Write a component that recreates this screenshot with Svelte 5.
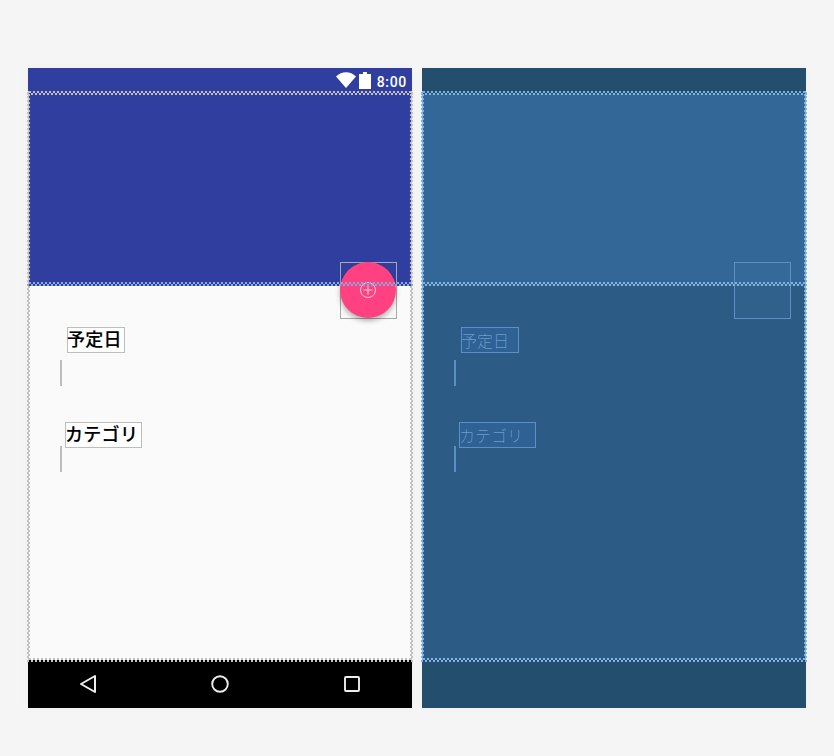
<script>
	const fields = [
		{ label: '予定日', inset: 7, width: 58 },
		{ label: 'カテゴリ', inset: 5, width: 77 }
	];
</script>

<div class="page">
	<section class="screen design">
		<div class="status">
			<svg class="wifi" viewBox="0 0 20 16" width="20" height="16"><path d="M0 4.5C5.5-1.2 14.5-1.2 20 4.5L10 16z" fill="#fff" /></svg>
			<svg class="battery" viewBox="0 0 12 17" width="12" height="17"><path d="M4 0h4v2h4v15H0V2h4z" fill="#fff" /></svg>
			<span class="time">8:00</span>
		</div>
		<div class="appbar"></div>
		<div class="content">
			{#each fields as f}
				<div class="field">
					<span class="label" style="margin-left: {f.inset}px; width: {f.width}px">{f.label}</span>
					<span class="input"></span>
				</div>
			{/each}
		</div>
		<div class="nav">
			<span class="key"><svg viewBox="0 0 18 20" width="18" height="20"><path d="M16 2v16L2 10z" fill="none" stroke="#eee" stroke-width="2" stroke-linejoin="round" /></svg></span>
			<span class="key"><svg viewBox="0 0 18 18" width="18" height="18"><circle cx="9" cy="9" r="7.8" fill="none" stroke="#eee" stroke-width="1.9" /></svg></span>
			<span class="key"><svg viewBox="0 0 16 16" width="16" height="16"><rect x="1" y="1" width="14" height="14" rx="1" fill="none" stroke="#eee" stroke-width="1.9" /></svg></span>
		</div>
		<div class="fab-box">
			<div class="fab">
				<svg viewBox="0 0 18 18" width="18" height="18"><circle cx="9" cy="9" r="7.5" fill="none" stroke="#fcd5e2" stroke-width="1" /><path d="M9 4.5v9M4.5 9h9" stroke="#fcd5e2" stroke-width="1" /></svg>
			</div>
		</div>
		<div class="frame upper"></div>
		<div class="frame lower"></div>
	</section>

	<section class="screen blueprint">
		<div class="status"></div>
		<div class="appbar"></div>
		<div class="content">
			{#each fields as f}
				<div class="field">
					<span class="label" style="margin-left: {f.inset}px; width: {f.width}px">{f.label}</span>
					<span class="input"></span>
				</div>
			{/each}
		</div>
		<div class="nav"></div>
		<div class="fab-box"></div>
		<div class="frame upper"></div>
		<div class="frame lower"></div>
	</section>
</div>

<style>
	:global(body) {
		margin: 0;
		background: #f5f5f5;
	}

	.page {
		display: flex;
		gap: 10px;
		padding: 68px 28px 48px;
		font-family: 'Noto Sans CJK JP', 'Noto Sans', sans-serif;
	}

	.screen {
		position: relative;
		display: flex;
		flex-direction: column;
		width: 384px;
		height: 640px;
		flex: none;
		box-shadow: 0 0 8px rgba(0, 0, 0, 0.03);
	}

	.status {
		display: flex;
		align-items: center;
		justify-content: flex-end;
		height: 26px;
		flex: none;
		padding: 0 5px 2px 0;
		box-sizing: border-box;
	}

	.wifi {
		margin-right: 3px;
	}

	.battery {
		margin-right: 6px;
	}

	.time {
		font-family: Roboto, sans-serif;
		font-size: 14px;
		font-weight: 500;
		color: #fff;
		letter-spacing: 0.7px;
		margin-top: 3px;
	}

	.appbar {
		height: 192px;
		flex: none;
	}

	.content {
		flex: 1;
		padding: 41px 0 0 32px;
		display: flex;
		flex-direction: column;
		gap: 36px;
	}

	.field {
		display: flex;
		flex-direction: column;
		align-items: flex-start;
		gap: 7px;
	}

	.field + .field {
		gap: 0;
	}

	.field + .field .input {
		margin-top: -2px;
	}

	.label {
		height: 26px;
		box-sizing: border-box;
		border: 1px solid;
		white-space: nowrap;
		text-indent: -1px;
	}

	.input {
		display: block;
		width: 2px;
		height: 26px;
	}

	.nav {
		display: flex;
		align-items: center;
		justify-content: center;
		height: 48px;
		flex: none;
	}

	.key {
		display: flex;
		justify-content: center;
		flex: none;
		width: 132px;
	}

	.fab-box {
		position: absolute;
		left: 312px;
		top: 194px;
		width: 57px;
		height: 57px;
		box-sizing: border-box;
		border: 1px solid;
	}

	.fab {
		width: 56px;
		height: 56px;
		margin: -1px 0 0 -1px;
		border-radius: 50%;
		background: #ff4081;
		box-shadow: 0 3px 5px rgba(0, 0, 0, 0.3);
		display: flex;
		align-items: center;
		justify-content: center;
	}

	/* zigzag selection outlines drawn over the panes */
	.frame {
		position: absolute;
		left: -1px;
		width: 386px;
		pointer-events: none;
		background:
			repeating-linear-gradient(90deg, transparent 0 2px, var(--t) 2px 4px) 0 0 / 100% 2px no-repeat,
			repeating-linear-gradient(90deg, var(--t) 0 2px, transparent 2px 4px) 0 2px / 100% 2px no-repeat,
			repeating-linear-gradient(90deg, var(--c) 0 2px, transparent 2px 4px) 0 100% / 100% 2px no-repeat,
			repeating-linear-gradient(90deg, transparent 0 2px, var(--c) 2px 4px) 0 calc(100% - 2px) / 100% 2px no-repeat,
			repeating-linear-gradient(0deg, var(--c) 0 2px, transparent 2px 4px) 0 0 / 2px 100% no-repeat,
			repeating-linear-gradient(0deg, transparent 0 2px, var(--c) 2px 4px) 1px 0 / 2px 100% no-repeat,
			repeating-linear-gradient(0deg, var(--c) 0 2px, transparent 2px 4px) 100% 0 / 2px 100% no-repeat,
			repeating-linear-gradient(0deg, transparent 0 2px, var(--c) 2px 4px) calc(100% - 1px) 0 / 2px 100% no-repeat;
	}

	.frame.upper {
		top: 23px;
		height: 195px;
	}

	.frame.lower {
		top: 214px;
		height: 380px;
	}

	/* design pane */
	.design .frame {
		--c: #c2c2c2;
		--t: #c2c2c2;
	}

	.design .frame.lower {
		--t: #8aa9da;
	}

	.design .status {
		background: #303f9f;
	}

	.design .appbar {
		background: #303f9f;
	}

	.design .content {
		background: #fafafa;
	}

	.design .label {
		background: #fff;
		color: #000;
		font-size: 18px;
		line-height: 20px;
		font-weight: 500;
		letter-spacing: 0.3px;
		-webkit-text-stroke: 0.15px #000;
		border-color: #bdbdbd;
	}

	.design .input {
		background: #bdbdbd;
	}

	.design .nav {
		background: #000;
	}

	.design .fab-box {
		border-color: #a8a8a8;
	}

	/* blueprint pane */
	.blueprint .frame {
		--c: #7eb3e2;
		--t: #7eb3e2;
	}

	.blueprint .status {
		background: #234e6e;
	}

	.blueprint .appbar {
		background: #336797;
	}

	.blueprint .content {
		background: #2c5c86;
	}

	.blueprint .label {
		background: #2f6194;
		color: #82b4e4;
		font-size: 16px;
		line-height: 25px;
		font-weight: 100;
		border-color: #5b90c4;
	}

	.blueprint .input {
		background: #5b90c4;
	}

	.blueprint .nav {
		background: #234e6e;
	}

	.blueprint .fab-box {
		background: rgba(60, 110, 165, 0.25);
		border-color: #5b90c4;
	}
</style>
